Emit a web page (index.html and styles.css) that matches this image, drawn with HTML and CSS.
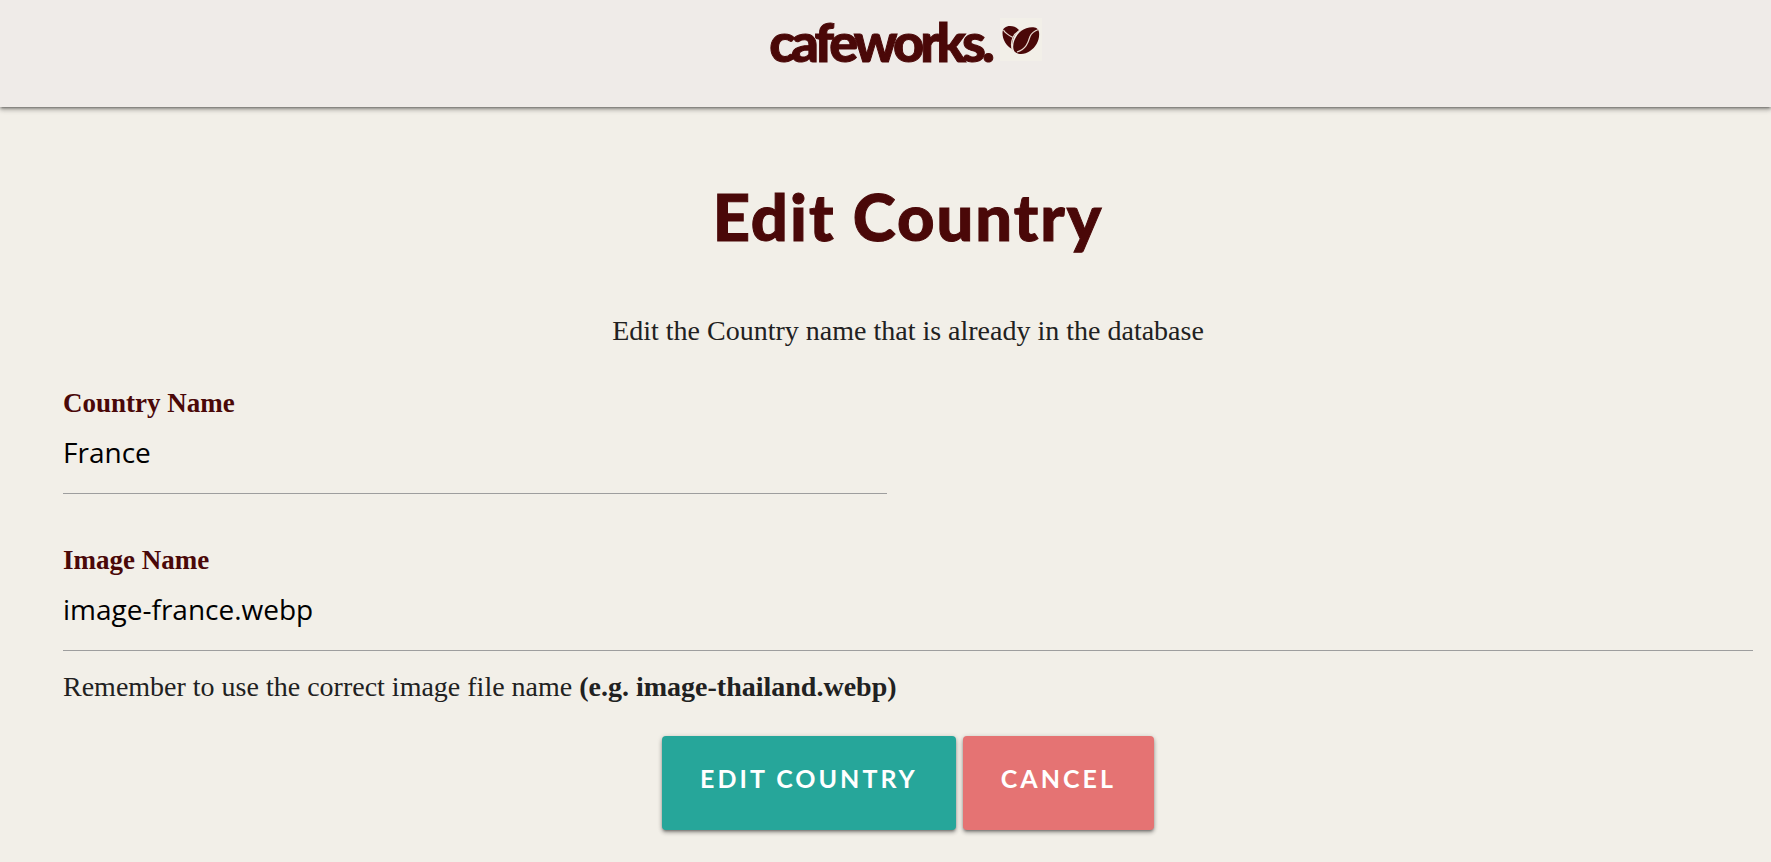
FILE: index.html
```html
<!DOCTYPE html>
<html lang="en">
<head>
<meta charset="utf-8">
<meta name="viewport" content="width=device-width, initial-scale=1">
<title>Edit Country</title>
<link rel="stylesheet" href="styles.css">
</head>
<body>
<header class="site-header">
  <a class="brand" href="#">
    <span class="brand-name">cafeworks.</span>
    <span class="brand-mark">
      <svg viewBox="0 0 42 43" width="42" height="43" aria-hidden="true">
        <path class="bean" d="M2.500 15C2.500 10 6 8 10 8C14 8 17 9.500 19 12C14.500 16 11.500 23 12 31C6.500 28 2.500 22 2.500 15Z"/>
        <path class="bean" d="M39 14C40 22 36 29 30 33C25 36.500 18 37 14.500 33.500C11 28 15 18 21 13C27 8.500 38 7 39 14Z"/>
        <path class="seam" d="M3.500 12C5 15 8 17 13 19.500M20.500 12.500C17 14 14 16.500 13 19.500C11.500 23 11 28 12.500 32.500"/>
        <path class="seam" d="M38.500 11.500C34 13 31.500 15 30 18.500C28 25 26 31 17 34"/>
      </svg>
    </span>
  </a>
</header>
<main class="page">
  <h1 class="page-title">Edit Country</h1>
  <p class="intro">Edit the Country name that is already in the database</p>
  <form class="form">
    <div class="field field-half">
      <label class="field-label" for="country-name">Country Name</label>
      <input class="field-input" id="country-name" type="text" value="France">
    </div>
    <div class="field">
      <label class="field-label" for="image-name">Image Name</label>
      <input class="field-input" id="image-name" type="text" value="image-france.webp">
    </div>
    <p class="hint">Remember to use the correct image file name <strong>(e.g. image-thailand.webp)</strong></p>
    <div class="actions">
      <button class="btn btn-primary" type="submit">Edit Country</button>
      <button class="btn btn-cancel" type="button">Cancel</button>
    </div>
  </form>
</main>
</body>
</html>
```
FILE: styles.css
```css
* {
  box-sizing: border-box;
}

body {
  margin: 0;
  background: #f2efe8;
  color: #212121;
  font: 28px/42px "Liberation Serif", "Times New Roman", serif;
}

.site-header {
  display: flex;
  justify-content: center;
  padding: 18px 0 44px;
  background: #efebe8;
  box-shadow: 0 2px 2px rgba(0, 0, 0, 0.14), 0 3px 1px -2px rgba(0, 0, 0, 0.12), 0 1px 5px rgba(0, 0, 0, 0.2), 0 3px 5px rgba(0, 0, 0, 0.2);
}

.brand {
  display: flex;
  gap: 9px;
  padding-left: 40px;
  color: #4a0808;
  text-decoration: none;
}

.brand-name {
  padding-top: 2px;
  font: 900 54px/43px Lato, sans-serif;
  letter-spacing: -4px;
  -webkit-text-stroke: 1px #4a0808;
}

.brand-mark {
  display: flex;
  align-self: flex-start;
  background: #f2efe8;
}

.bean {
  fill: #4a0808;
}

.seam {
  fill: none;
  stroke: #e9d9d0;
  stroke-width: 1.2;
}

.page {
  padding: 70px 18px 28px 63px;
}

.page-title {
  margin: 0;
  color: #4a0808;
  font: 900 65px/78px Lato, sans-serif;
  letter-spacing: 2px;
  text-align: center;
  -webkit-text-stroke: 1px #4a0808;
}

.intro {
  margin: 55px 0 0;
  text-align: center;
}

.form {
  margin-top: 33px;
}

.field {
  display: flex;
  flex-direction: column;
  margin-bottom: 15px;
}

.field-half {
  width: 50%;
  max-width: 824px;
  margin-bottom: 48px;
}

.field-label {
  color: #4a0808;
  font-size: 27px;
  font-weight: 700;
  line-height: 36px;
}

.field-input {
  width: 100%;
  height: 73px;
  padding: 0 0 11px;
  border: 0;
  border-bottom: 1px solid #9e9e9e;
  border-radius: 0;
  outline: 0;
  background: transparent;
  color: #000;
  font: 28px "Open Sans", "Noto Sans", sans-serif;
}

.hint {
  margin: 0;
}

.actions {
  display: flex;
  justify-content: center;
  gap: 7px;
  margin-top: 28px;
}

.btn {
  padding: 27px 38px 37px;
  border: 0;
  border-radius: 4px;
  color: #fff;
  font: 700 25px/30px Lato, sans-serif;
  letter-spacing: 3px;
  text-transform: uppercase;
  box-shadow: 0 2px 2px rgba(0, 0, 0, 0.14), 0 3px 1px -2px rgba(0, 0, 0, 0.12), 0 1px 5px rgba(0, 0, 0, 0.2), 0 3px 4px rgba(0, 0, 0, 0.2);
}

.btn-primary {
  background: #26a69a;
}

.btn-cancel {
  background: #e57373;
}
```
